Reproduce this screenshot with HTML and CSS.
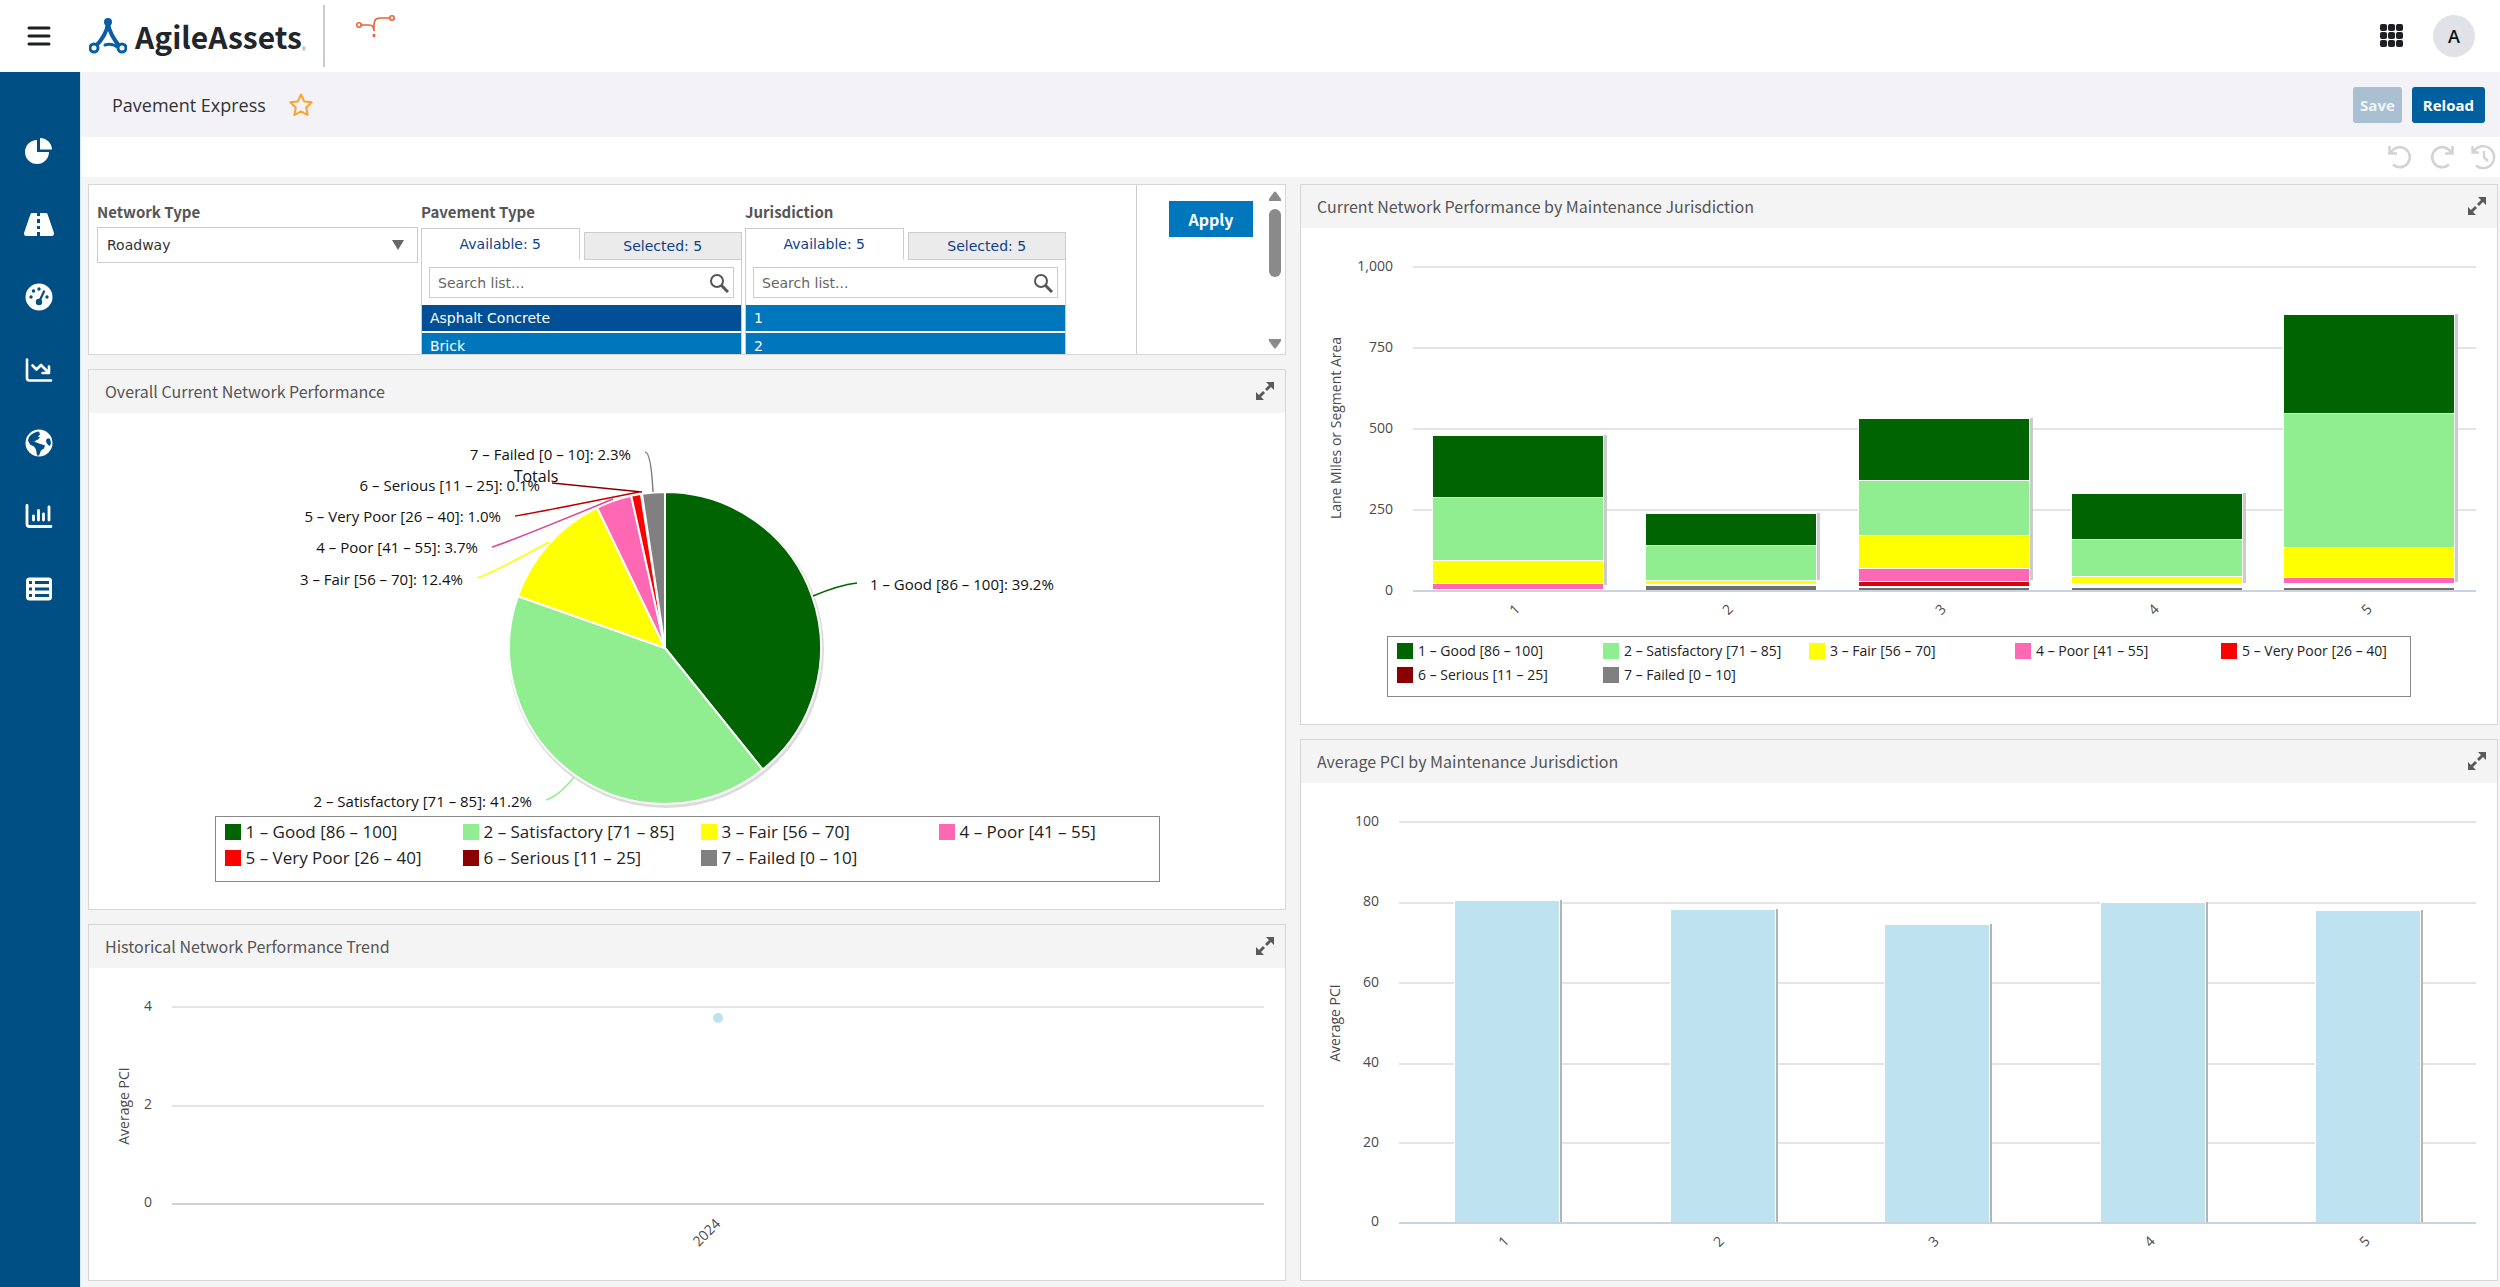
FILE: index.html
```html
<!DOCTYPE html>
<html lang="en">
<head>
<meta charset="utf-8">
<meta name="viewport" content="width=device-width, initial-scale=1">
<title>Pavement Express - AgileAssets</title>
<link rel="stylesheet" href="styles.css">
</head>
<body>
<svg class="defs" aria-hidden="true">
  <symbol id="expand" viewBox="0 0 18 18"><path d="M10 0h8v8l-3-3-4 4-2-2 4-4zM0 10l3 3 4-4 2 2-4 4 3 3H0z"/></symbol>
  <symbol id="search" viewBox="0 0 20 20"><circle cx="8" cy="8" r="6" fill="none" stroke="currentColor" stroke-width="2"/><path d="M12 12l7 7" stroke="currentColor" stroke-width="3"/></symbol>
</svg>

<header class="topbar">
  <button class="icon-button menu-button" aria-label="Menu">
    <svg width="24" height="20" viewBox="0 0 24 20"><path d="M2 2h20M2 10h20M2 18h20" stroke="#1d1f21" stroke-width="3" stroke-linecap="round"/></svg>
  </button>
  <a class="brand" href="#">
    <svg width="38" height="36" viewBox="0 0 38 36" fill="none" stroke="#0a5fa3">
      <path d="M19 5C18 14 13 22 6 29M19 5c1 9 6 17 13 25" stroke-width="4"/>
      <path d="M16 27c6-2 10 0 14 3" stroke-width="3" stroke-linecap="round"/>
      <circle cx="19" cy="4" r="4" fill="#0a5fa3" stroke="none"/>
      <circle cx="5" cy="30" r="4" fill="#fff" stroke-width="3"/>
      <circle cx="33" cy="30" r="4" fill="#fff" stroke-width="3"/>
    </svg>
    <span class="brand-name">AgileAssets</span><span class="brand-mark">®</span>
  </a>
  <svg class="partner" width="40" height="24" viewBox="0 0 40 24" fill="none" stroke="#e8623a" stroke-width="1.6">
    <circle cx="3" cy="11" r="2.2"/><circle cx="36" cy="4" r="2.2"/>
    <path d="M5 11h8c4 0 5 2 5 6v-6c0-5 2-7 6-7h10"/><path d="M18 20v3" stroke-width="2.6"/>
  </svg>
  <div class="account">
    <button class="icon-button" aria-label="Applications">
      <svg width="24" height="24" viewBox="0 0 24 24" fill="#1d1f21"><rect width="7" height="7" rx="2"/><rect x="8" width="7" height="7" rx="2"/><rect x="16" width="7" height="7" rx="2"/><rect y="8" width="7" height="7" rx="2"/><rect x="8" y="8" width="7" height="7" rx="2"/><rect x="16" y="8" width="7" height="7" rx="2"/><rect y="16" width="7" height="7" rx="2"/><rect x="8" y="16" width="7" height="7" rx="2"/><rect x="16" y="16" width="7" height="7" rx="2"/></svg>
    </button>
    <button class="avatar" aria-label="Account">A</button>
  </div>
</header>

<div class="shell">
  <nav class="sidebar" aria-label="Main">
    <a href="#" aria-label="Dashboards"><svg viewBox="0 0 30 28"><path fill="#fff" d="M13 3v12h12A12 12 0 1 1 13 3zM16 1a12 12 0 0 1 12 11.500H16z"/></svg></a>
    <a href="#" aria-label="Road"><svg viewBox="0 0 30 28"><path fill="#fff" fill-rule="evenodd" d="M8 3h5v3h3V3h6q1 0 1.500 1L30 23q0 3-2 3H16v-4h-3v4H2q-2 0-2-3L6.500 4q.5-1 1.500-1zM13 9v4h3V9zM13 16v3h3v-3z"/></svg></a>
    <a href="#" aria-label="Performance"><svg viewBox="0 0 30 28"><circle cx="15" cy="14" r="13.500" fill="#fff"/><g fill="#004f84"><circle cx="7" cy="14" r="1.700"/><circle cx="9.500" cy="8" r="1.700"/><circle cx="15" cy="6" r="1.700"/><circle cx="23" cy="14" r="1.700"/><circle cx="15" cy="19" r="3.200"/></g><path d="M15 19l5-10.500" stroke="#004f84" stroke-width="2.200" stroke-linecap="round"/></svg></a>
    <a href="#" aria-label="Trends"><svg viewBox="0 0 30 28" fill="none" stroke="#fff" stroke-width="2.600" stroke-linecap="round" stroke-linejoin="round"><path d="M3 3.500V22q0 2.500 2.500 2.500H27M8.500 9.500l4 4 4.500-4.500 8 8M25 10.500V17h-6.500"/></svg></a>
    <a href="#" aria-label="Map"><svg viewBox="0 0 30 28"><circle cx="15" cy="14" r="13.500" fill="#fff"/><path fill="#004f84" d="M5 8q4-5 10-5.500l1 3-2 2 2 1-2 2-4 2 5 2 6 2-1 3-3 2-2 5h-2l-1-6-2-3-4-2-2-4zM22 11q2-3 4-1l1 4-1 3q-4-2-4-6z"/></svg></a>
    <a href="#" aria-label="Reports"><svg viewBox="0 0 30 28" fill="none" stroke="#fff" stroke-width="2.800" stroke-linecap="round"><path d="M3 3.500V22q0 2.500 2.500 2.500H27M9.500 14v4M14.500 8.500V18M19.500 12v6M25 5v13"/></svg></a>
    <a href="#" aria-label="Tables"><svg viewBox="0 0 30 28"><rect x="2" y="2.500" width="26" height="23" rx="3.500" fill="#fff"/><path fill="#004f84" d="M5 6h3v3H5zM11 6h14v3H11zM5 12.500h3v3H5zM11 12.500h14v3H11zM5 19h3v3H5zM11 19h14v3H11z"/></svg></a>
  </nav>

  <div class="page">
    <div class="titlebar">
      <h1>Pavement Express</h1>
      <button class="icon-button" aria-label="Add to favorites">
        <svg width="26" height="26" viewBox="0 0 26 26"><path d="M13 2.500l3.200 6.900 7.500.9-5.500 5.200 1.400 7.500-6.600-3.700L6.400 23l1.400-7.500-5.500-5.200 7.500-.9z" fill="none" stroke="#fba42c" stroke-width="2" stroke-linejoin="round"/></svg>
      </button>
      <div class="actions">
        <button class="action action-disabled" disabled>Save</button>
        <button class="action">Reload</button>
      </div>
    </div>
    <div class="toolbar">
      <button class="icon-button" aria-label="Undo"><svg width="26" height="26" viewBox="0 0 26 26"><path d="M4 8.500A10 10 0 1 1 6 20.500M2.500 2v7.500H10" fill="none" stroke="#d3d3d3" stroke-width="2.600"/></svg></button>
      <button class="icon-button" aria-label="Redo"><svg width="26" height="26" viewBox="0 0 26 26"><path d="M22 8.500A10 10 0 1 0 20 20.500M23.500 2v7.500H16" fill="none" stroke="#d3d3d3" stroke-width="2.600"/></svg></button>
      <button class="icon-button" aria-label="History"><svg width="26" height="26" viewBox="0 0 26 26"><path d="M3 7A11 11 0 1 1 5 21.500M1.500 2v6.500H8M13 7v6.500l4 3.500" fill="none" stroke="#d3d3d3" stroke-width="2.400"/></svg></button>
    </div>

    <main class="board">
      <div class="column">
        <section class="panel filters" aria-label="Filters">
          <div class="fields">
            <div class="field">
              <label for="network">Network Type</label>
              <div class="select-wrap">
                <select id="network"><option>Roadway</option></select>
                <svg class="caret" width="12" height="10" viewBox="0 0 12 10"><path d="M0 0h12L6 10z" fill="#666"/></svg>
              </div>
            </div>
            <div class="field">
              <label for="pavement">Pavement Type</label>
              <div class="tabs"><button class="tab tab-active">Available: 5</button><button class="tab">Selected: 5</button></div>
              <div class="picker">
                <div class="search"><input id="pavement" type="text" placeholder="Search list..."><svg width="20" height="20"><use href="#search"/></svg></div>
                <ul><li class="current">Asphalt Concrete</li><li>Brick</li></ul>
              </div>
            </div>
            <div class="field">
              <label for="jurisdiction">Jurisdiction</label>
              <div class="tabs"><button class="tab tab-active">Available: 5</button><button class="tab">Selected: 5</button></div>
              <div class="picker">
                <div class="search"><input id="jurisdiction" type="text" placeholder="Search list..."><svg width="20" height="20"><use href="#search"/></svg></div>
                <ul><li>1</li><li>2</li></ul>
              </div>
            </div>
          </div>
          <div class="apply-cell"><button class="apply">Apply</button></div>
          <div class="scrollbar" aria-hidden="true">
            <svg width="12" height="10" viewBox="0 0 12 10"><path d="M5 1q1-1 2 0l5 7v2H0V8z" fill="#8a8a8a"/></svg>
            <span class="thumb"></span>
            <svg width="12" height="10" viewBox="0 0 12 10"><path d="M5 9q1 1 2 0l5-7V0H0v2z" fill="#8a8a8a"/></svg>
          </div>
        </section>

        <section class="panel">
          <div class="panel-head"><h2>Overall Current Network Performance</h2><button class="icon-button" aria-label="Expand"><svg class="expand" width="18" height="18"><use href="#expand"/></svg></button></div>
          <svg class="chart pie" viewBox="0 0 1196 403" role="img" aria-label="Overall current network performance">
            <circle cx="577" cy="237" r="158" fill="#dcdcdc"/>
            <g stroke="#fff" stroke-width="2">
              <path d="M576 235V79A156 156 0 0 1 673.700 356.600z" fill="#006400"/>
              <path d="M576 235L673.700 356.600A156 156 0 0 1 428.900 183.200z" fill="#90ee90"/>
              <path d="M576 235L428.900 183.200A156 156 0 0 1 508.100 94.500z" fill="#ff0"/>
              <path d="M576 235L508.100 94.500A156 156 0 0 1 542.200 82.700z" fill="#ff69b4"/>
              <path d="M576 235L542.200 82.700A156 156 0 0 1 551.900 80.900z" fill="red"/>
              <path d="M576 235L553 80.700A156 156 0 0 1 576 79z" fill="#808080"/>
            </g>
            <g fill="none" stroke-width="1.500">
              <path d="M768 170Q750 172 724 183" stroke="#006400"/>
              <path d="M457 387Q470 383 485 364" stroke="#90ee90"/>
              <path d="M388 165Q400 162 460 129" stroke="#ff0"/>
              <path d="M403 134Q415 131 524 86" stroke="#d9489a"/>
              <path d="M426 103Q440 101 550 79" stroke="#c00000"/>
              <path d="M463 70Q475 71 553 79" stroke="#8b0000"/>
              <path d="M556 39Q562 39 564 79" stroke="#808080"/>
            </g>
            <text class="pie-title" x="447" y="69" text-anchor="middle">Totals</text>
            <text x="542" y="47" text-anchor="end">7 – Failed [0 – 10]: 2.3%</text>
            <text x="451" y="78" text-anchor="end">6 – Serious [11 – 25]: 0.1%</text>
            <text x="412" y="109" text-anchor="end">5 – Very Poor [26 – 40]: 1.0%</text>
            <text x="389" y="140" text-anchor="end">4 – Poor [41 – 55]: 3.7%</text>
            <text x="374" y="172" text-anchor="end">3 – Fair [56 – 70]: 12.4%</text>
            <text x="443" y="394" text-anchor="end">2 – Satisfactory [71 – 85]: 41.2%</text>
            <text x="781" y="177">1 – Good [86 – 100]: 39.2%</text>
          </svg>
          <ul class="legend legend-large">
            <li class="good">1 – Good [86 – 100]</li><li class="satisfactory">2 – Satisfactory [71 – 85]</li><li class="fair">3 – Fair [56 – 70]</li><li class="poor">4 – Poor [41 – 55]</li><li class="very-poor">5 – Very Poor [26 – 40]</li><li class="serious">6 – Serious [11 – 25]</li><li class="failed">7 – Failed [0 – 10]</li>
          </ul>
        </section>

        <section class="panel">
          <div class="panel-head"><h2>Historical Network Performance Trend</h2><button class="icon-button" aria-label="Expand"><svg class="expand" width="18" height="18"><use href="#expand"/></svg></button></div>
          <svg class="chart" viewBox="0 0 1196 312" role="img" aria-label="Historical network performance trend">
            <g class="grid"><path d="M83 39H1175M83 138H1175"/><path class="axis" d="M83 236H1175"/></g>
            <g text-anchor="end"><text x="63" y="43">4</text><text x="63" y="141">2</text><text x="63" y="239">0</text></g>
            <text transform="translate(40 138) rotate(-90)" text-anchor="middle">Average PCI</text>
            <circle cx="629" cy="50" r="5" fill="#bfe2f1"/>
            <text transform="translate(621 268) rotate(-45)" text-anchor="middle">2024</text>
          </svg>
        </section>
      </div>

      <div class="column">
        <section class="panel">
          <div class="panel-head"><h2>Current Network Performance by Maintenance Jurisdiction</h2><button class="icon-button" aria-label="Expand"><svg class="expand" width="18" height="18"><use href="#expand"/></svg></button></div>
          <svg class="chart" viewBox="0 0 1196 408" role="img" aria-label="Lane miles by jurisdiction and condition">
            <g class="grid"><path d="M112 39H1175M112 120H1175M112 201H1175M112 282H1175"/><path class="axis" d="M112 363H1175"/></g>
            <g text-anchor="end"><text x="92" y="43">1,000</text><text x="92" y="124">750</text><text x="92" y="205">500</text><text x="92" y="286">250</text><text x="92" y="367">0</text></g>
            <text transform="translate(40 200) rotate(-90)" text-anchor="middle">Lane Miles or Segment Area</text>
            <path fill="#fff" d="M131 207h172v155H131zM344 285h172v77H344zM557 190h172v172H557zM770 265h172v97H770zM982 86h172v276H982z"/>
            <path fill="#cbcbcb" d="M303 207h3v150h-3zM516 285h3v67h-3zM729 190h3v162h-3zM942 265h3v90h-3zM1154 86h3v268h-3z"/>
            <path fill="#006400" d="M132 208h170v61H132zM345 286h170v31H345zM558 191h170v61H558zM771 266h170v45H771zM983 87h170v98H983z"/>
            <path fill="#90ee90" d="M132 270h170v62H132zM345 318h170v34H345zM558 253h170v54H558zM771 312h170v36H771zM983 186h170v133H983z"/>
            <path fill="#ff0" d="M132 333h170v22H132zM345 353h170v3H345zM558 308h170v32H558zM771 349h170v6H771zM983 320h170v29H983z"/>
            <path fill="#ff69b4" d="M132 356h170v5H132zM558 341h170v12H558zM983 350h170v5H983z"/>
            <path fill="#d4060c" d="M558 354h170v4H558z"/>
            <path fill="#6f6f6f" d="M345 358h170v4H345zM558 360h170v2H558zM771 360h170v2H771zM983 360h170v2H983z"/>
            <g text-anchor="middle">
              <text transform="translate(217 385) rotate(-45)">1</text><text transform="translate(430 385) rotate(-45)">2</text><text transform="translate(643 385) rotate(-45)">3</text><text transform="translate(856 385) rotate(-45)">4</text><text transform="translate(1069 385) rotate(-45)">5</text>
            </g>
          </svg>
          <ul class="legend">
            <li class="good">1 – Good [86 – 100]</li><li class="satisfactory">2 – Satisfactory [71 – 85]</li><li class="fair">3 – Fair [56 – 70]</li><li class="poor">4 – Poor [41 – 55]</li><li class="very-poor">5 – Very Poor [26 – 40]</li><li class="serious">6 – Serious [11 – 25]</li><li class="failed">7 – Failed [0 – 10]</li>
          </ul>
        </section>

        <section class="panel">
          <div class="panel-head"><h2>Average PCI by Maintenance Jurisdiction</h2><button class="icon-button" aria-label="Expand"><svg class="expand" width="18" height="18"><use href="#expand"/></svg></button></div>
          <svg class="chart" viewBox="0 0 1196 497" role="img" aria-label="Average PCI by jurisdiction">
            <g class="grid"><path d="M98 39H1175M98 120H1175M98 200H1175M98 281H1175M98 360H1175"/></g>
            <g text-anchor="end"><text x="78" y="43">100</text><text x="78" y="123">80</text><text x="78" y="204">60</text><text x="78" y="284">40</text><text x="78" y="364">20</text><text x="78" y="443">0</text></g>
            <text transform="translate(39 240) rotate(-90)" text-anchor="middle">Average PCI</text>
            <path fill="#fff" d="M153 117h106v323H153zM369 126h106v314H369zM583 141h106v299H583zM799 119h106v321H799zM1014 127h106v313H1014z"/>
            <path fill="#b4b4b4" d="M259 117h2v323h-2zM475 126h2v314h-2zM689 141h2v299h-2zM905 119h2v321h-2zM1120 127h2v313h-2z"/>
            <path fill="#bfe2f1" d="M154 118h104v322H154zM370 127h104v313H370zM584 142h104v298H584zM800 120h104v320H800zM1015 128h104v312H1015z"/>
            <g class="grid"><path class="axis" d="M98 440H1175"/></g>
            <g text-anchor="middle">
              <text transform="translate(206 462) rotate(-45)">1</text><text transform="translate(421 462) rotate(-45)">2</text><text transform="translate(636 462) rotate(-45)">3</text><text transform="translate(852 462) rotate(-45)">4</text><text transform="translate(1067 462) rotate(-45)">5</text>
            </g>
          </svg>
        </section>
      </div>
    </main>
  </div>
</div>
</body>
</html>
```
FILE: styles.css
```css
* { box-sizing: border-box; }

body {
  margin: 0;
  min-height: 100vh;
  display: flex;
  flex-direction: column;
  background: #f4f4f4;
  color: #333;
  font-family: "Open Sans", "Noto Sans", sans-serif;
  font-size: 14px;
}

h1, h2, ul { margin: 0; padding: 0; font-weight: 400; list-style: none; }
button, input, select { font: inherit; color: inherit; }
svg { display: block; flex: none; }
.defs { position: absolute; width: 0; height: 0; }

.icon-button { padding: 0; border: 0; background: none; cursor: pointer; }

/* Top bar */
.topbar {
  display: flex;
  align-items: center;
  height: 72px;
  padding: 0 25px 0 27px;
  background: #fff;
}
.brand {
  display: flex;
  align-items: center;
  height: 62px;
  margin-left: 38px;
  padding-right: 17px;
  border-right: 2px solid #ccc;
  color: #22262a;
  text-decoration: none;
}
.brand-name {
  margin-left: 8px;
  font: 700 30px/40px "Noto Sans CJK SC", "Open Sans", sans-serif;
}
.brand-mark { align-self: flex-end; font-size: 5px; line-height: 36px; color: #888; }
.partner { align-self: flex-start; margin: 14px 0 0 31px; }
.account { display: flex; align-items: center; gap: 29px; margin-left: auto; }
.avatar {
  width: 42px;
  height: 42px;
  padding: 0;
  border: 0;
  border-radius: 50%;
  background: #e1e1e8;
  color: #111;
  font-size: 18px;
  font-weight: 600;
}

.shell { display: flex; flex: 1; }

/* Sidebar */
.sidebar {
  display: flex;
  flex: 0 0 80px;
  flex-direction: column;
  gap: 45px;
  padding-top: 65px;
  background: #004f84;
}
.sidebar a { display: block; width: 30px; height: 28px; margin-left: 24px; }

.page { flex: 1; min-width: 0; display: flex; flex-direction: column; border-left: 1px solid #dfe6ee; }

.titlebar {
  display: flex;
  align-items: center;
  height: 65px;
  padding: 0 15px 0 31px;
  background: #f2f2f7;
}
.titlebar h1 { margin-right: 22px; font-size: 18px; line-height: 24px; }
.actions { display: flex; gap: 10px; margin-left: auto; }
.action {
  height: 36px;
  padding: 0 11px;
  border: 0;
  border-radius: 3px;
  background: #005f9f;
  color: #fff;
  font-size: 15px;
  font-weight: 700;
}
.action-disabled { padding: 0 7px; background: #a8c0d2; color: #f2f5f9; }

.toolbar {
  display: flex;
  align-items: center;
  justify-content: flex-end;
  gap: 16px;
  height: 40px;
  padding-right: 3px;
  background: #fff;
}

/* Dashboard */
.board {
  display: grid;
  flex: 1;
  grid-template-columns: 1fr 1fr;
  gap: 14px;
  padding: 7px 2px 6px 7px;
}
.column { display: flex; flex-direction: column; gap: 14px; min-width: 0; }
.panel { border: 1px solid #d6d6d6; background: #fff; }
.panel-head {
  display: flex;
  align-items: center;
  justify-content: space-between;
  height: 43px;
  padding: 0 11px 2px 16px;
  background: #f4f4f4;
}
.panel-head h2 {
  color: #555;
  font: 400 16px/24px "Noto Sans CJK SC", sans-serif;
}
.expand { fill: #5a5a5a; }

/* Filters */
.filters { display: flex; height: 171px; overflow: hidden; }
.fields { display: flex; flex: 1; gap: 3px; padding: 15px 8px 0; }
.field { flex: 0 0 321px; }
.field label {
  display: block;
  margin-bottom: 3px;
  color: #555;
  font: 700 15px/24px "Noto Sans CJK SC", sans-serif;
}
.select-wrap { display: flex; align-items: center; border: 1px solid #ccc; font-family: "DejaVu Sans", sans-serif; }
.select-wrap select { flex: 1; height: 34px; padding: 0 9px; border: 0; background: none; appearance: none; }
.caret { margin-right: 13px; }
.tabs { display: flex; align-items: flex-end; height: 33px; }
.tab {
  flex: 1;
  height: 28px;
  margin-left: 4px;
  padding: 0;
  border: 1px solid #ccc;
  background: #ebebeb;
  color: #0d3f8a;
  font-family: "DejaVu Sans", sans-serif;
}
.tab-active { height: 32px; margin-left: 0; border-bottom-color: #fff; background: #fff; }
.picker { padding-top: 7px; border: 1px solid #ccc; border-width: 0 1px; font-family: "DejaVu Sans", sans-serif; }
.search { display: flex; align-items: center; height: 31px; margin: 0 7px 7px; padding-right: 4px; border: 1px solid #ccc; color: #555; }
.search input { flex: 1; min-width: 0; padding: 0 8px; border: 0; background: none; outline: 0; }
.search input::placeholder { color: #666; opacity: 1; }
.picker li { height: 26px; margin-bottom: 2px; padding-left: 8px; background: #0076bd; color: #fff; line-height: 26px; }
.picker .current { background: #004f97; }
.apply-cell { padding: 16px 16px 0 32px; border-left: 1px solid #ccc; }
.apply {
  width: 84px;
  height: 36px;
  padding: 0;
  border: 0;
  background: #0076bd;
  color: #fff;
  font: 700 16px/34px "Noto Sans CJK SC", sans-serif;
}
.scrollbar { display: flex; flex-direction: column; justify-content: space-between; padding: 6px 4px 5px 0; }
.thumb { height: 68px; margin: 8px 0 auto; border-radius: 6px; background: #8a8a8a; }

/* Charts */
.chart { width: 100%; height: auto; fill: #4a4a4a; }
.pie { fill: #111; font-size: 15px; }
.pie-title { font-size: 16px; }
.grid { fill: none; stroke: #e4e4e4; stroke-width: 2; }
.grid .axis { stroke: #ccd3e0; }

.legend {
  display: grid;
  grid-template-columns: repeat(5, 206px);
  width: 1024px;
  max-width: 100%;
  height: 61px;
  margin: 0 auto 27px;
  padding: 2px 9px;
  border: 1px solid #888;
  color: #222;
  line-height: 24px;
  align-content: start;
}
.legend li { display: flex; align-items: center; gap: 5px; white-space: nowrap; }
.legend li::before { content: ""; width: 16px; height: 16px; background: var(--swatch); }
.legend-large {
  grid-template-columns: repeat(4, 238px);
  width: 945px;
  height: 66px;
  font-size: 17px;
  line-height: 26px;
}
.good { --swatch: #006400; }
.satisfactory { --swatch: #90ee90; }
.fair { --swatch: #ff0; }
.poor { --swatch: #ff69b4; }
.very-poor { --swatch: #f00; }
.serious { --swatch: #8b0000; }
.failed { --swatch: #808080; }
```
